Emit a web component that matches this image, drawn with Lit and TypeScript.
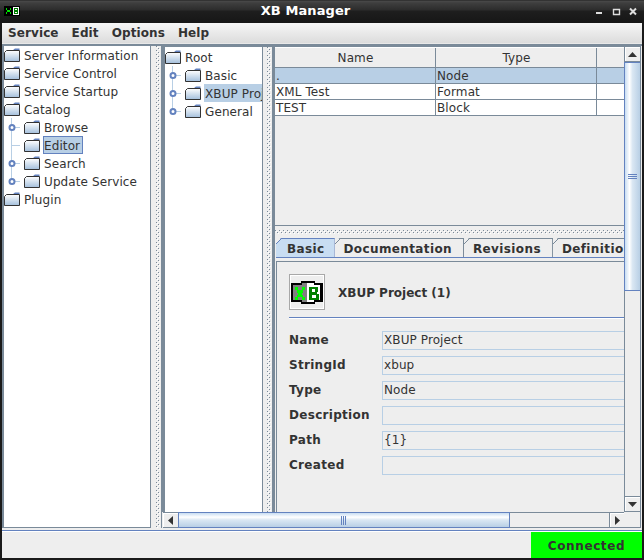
import { LitElement, html, css, svg } from 'lit';
import { customElement } from 'lit/decorators.js';

const folder = html`<svg class="folder" width="16" height="14" viewBox="0 0 16 14">
  <defs><linearGradient id="fg" x1="0" y1="0" x2="0" y2="1"><stop offset="0" stop-color="#fff"/><stop offset="1" stop-color="#a3bfdc"/></linearGradient></defs>
  <path d="M9.5 1.5 L11 0.5 H15.5 V2.5 H9.5Z" fill="#6382bf"/>
  <path d="M0.5 4.5 L2.5 2.5 H15.5 V13.5 H0.5Z" fill="url(#fg)" stroke="#333" stroke-width="1"/>
</svg>`;

// pixel logo: grey page with green X, white page with dark green B
const xbLogo = svg`<svg width="32" height="25" viewBox="0 0 32 25" shape-rendering="crispEdges">
  <path d="M0 3 H10 V1 H24 V3 H32 V22 H24 V24 H10 V22 H0Z" fill="#000"/>
  <path d="M2 5 H11 V3 H16 V22 H11 V20 H2Z" fill="#808080"/>
  <path d="M16 3 H23 V5 H29 V20 H23 V22 H16Z" fill="#fff"/>
  <path d="M4 7h3v3h-3z M11 7h3v3h-3z M6 10h6v3h-6z M7 13h4v2h-4z M6 15h6v2h-6z M4 17h3v3h-3z M11 17h3v3h-3z" fill="#00ff00"/>
  <path d="M18 7 H27 V12 H26 V14 H28 V20 H18Z M21 9 V12 H24 V9Z M21 15 V18 H25 V15Z" fill="#008000" fill-rule="evenodd"/>
</svg>`;

const titleIcon = svg`<svg class="appicon" width="16" height="10" viewBox="0 0 16 10" shape-rendering="crispEdges">
  <rect width="16" height="10" fill="#000"/>
  <rect x="9" y="1" width="6" height="8" fill="#fff"/>
  <path d="M2 2h1v2h-1z M6 2h1v2h-1z M3 4h3v2h-3z M2 6h1v2h-1z M6 6h1v2h-1z" fill="#00e000"/>
  <path d="M10 2h4v6h-4z M11 3v1h2v-1z M11 6v1h2v-1z" fill="#008000" fill-rule="evenodd"/>
</svg>`;

@customElement('tree-row')
class TreeRow extends LitElement {
  static properties = {
    label: { type: String },
    depth: { type: Number },
    knob: { type: Boolean },
    sel: { type: String },
    last: { type: Boolean },
  };
  label = '';
  depth = 0;
  knob = false;
  sel = '';
  last = false;

  static styles = css`
    :host { display: block; height: 18px; }
    .row { display: flex; align-items: center; height: 18px; white-space: nowrap; }
    .gut { flex: none; display: block; }
    .folder { flex: none; margin: 0 3px 0 0; }
    .text { box-sizing: border-box; height: 18px; line-height: 18px; padding-right: 2px; border: 1px solid transparent; letter-spacing: 0.1px; }
    .text.focus { background: #b8cfe5; border-color: #6382bf; }
    .text.fill { background: #b8cfe5; flex: 1; }
  `;

  render() {
    const gut = this.depth === 0 ? html`` : html`<svg class="gut" width="20" height="18" viewBox="0 0 20 18">
      <path d="M7.5 0 V${this.last ? 9 : 18}" stroke="#b8cfe5"/>
      <path d="M7.5 9.5 H16" stroke="#b8cfe5"/>
      ${this.knob ? svg`<circle cx="8" cy="9.5" r="2.5" fill="#fff" stroke="#6382bf" stroke-width="2"/>` : ''}
    </svg>`;
    const cls = this.sel === 'focus' ? 'text focus' : this.sel === 'fill' ? 'text fill' : 'text';
    return html`<div class="row">${gut}${folder}<span class=${cls}>${this.label}</span></div>`;
  }
}

@customElement('app-root')
export class AppRoot extends LitElement {
  static styles = css`
    :host {
      display: block;
      width: 644px;
      height: 560px;
      overflow: hidden;
      background: #1a1a1a;
      font-family: "DejaVu Sans", sans-serif;
      font-size: 12px;
      color: #333;
    }
    .window { display: flex; flex-direction: column; height: 560px; }

    /* title bar */
    .titlebar {
      height: 23px;
      flex: none;
      display: flex;
      align-items: center;
      position: relative;
      box-sizing: border-box;
      padding: 0 33px 3px 0;
      background: linear-gradient(#1c1c1c 0, #4a4a4a 1px, #3e3e3e 3px, #2c2c2c 10px, #1e1e1e 11px, #161616 100%);
      color: #fff;
      font-weight: bold;
      font-size: 13px;
      justify-content: center;
      letter-spacing: 0.1px;
    }
    .appicon { position: absolute; left: 4px; top: 6px; }
    .winbtns { position: absolute; right: 7px; top: 6px; }

    .body {
      flex: 1;
      min-height: 0;
      margin: 0 2px 2px;
      display: flex;
      flex-direction: column;
      background: #eee;
    }

    /* menu */
    .menubar {
      height: 20px;
      flex: none;
      display: flex;
      align-items: center;
      background: linear-gradient(#f6f6f6, #dcdcdc);
      font-weight: bold;
      letter-spacing: 0.1px;
      padding-left: 6px;
      gap: 13px;
      border-bottom: 1px solid #e8e8e8;
    }

    .main {
      flex: 1;
      min-height: 0;
      display: flex;
      background: #7a8a99;
      padding-top: 2px;
      margin-bottom: 2px;
    }
    .tree {
      background: #fff;
      overflow: hidden;
      box-sizing: border-box;
      flex: none;
    }
    .tree.left { width: 147px; margin-left: 2px; border-right: 1px solid #7a8a99; border-bottom: 1px solid #7a8a99; }
    .tree.inner { width: 98px; padding-top: 1px; border-right: 1px solid #7a8a99; }

    /* split pane dividers: two staggered columns of bump dots */
    .vdiv {
      flex: none;
      background-color: #eee;
      background-image:
        linear-gradient(#7a8a99 1px, transparent 1px),
        linear-gradient(#7a8a99 1px, transparent 1px),
        linear-gradient(#fff 1px, transparent 1px),
        linear-gradient(#fff 1px, transparent 1px);
      background-repeat: repeat-y;
      background-size: 1px 4px;
    }
    .vdiv.outer { width: 10px; background-position: 5px 0, 7px 2px, 6px 1px, 8px 3px; }
    .vdiv.inside { width: 9px; background-position: 4px 0, 6px 2px, 5px 1px, 7px 3px; }

    .scrollpane {
      flex: 1;
      min-width: 0;
      display: grid;
      grid-template-columns: 462px 17px;
      grid-template-rows: 466px 16px;
      background: #eee;
      margin-left: 1px;
    }
    .viewport { display: flex; min-width: 0; min-height: 0; overflow: hidden; background: #7a8a99; padding: 1px 0 0 3px; }

    .right { flex: 1; min-width: 0; display: flex; flex-direction: column; background: #eee; margin-left: 3px; }

    /* table */
    .tablepane { height: 179px; box-sizing: border-box; flex: none; background: #eee; border-bottom: 1px solid #7a8a99; }
    .tr { display: grid; grid-template-columns: 161px 161px 1fr; height: 16px; background: #fff; border-bottom: 1px solid #7a8a99; line-height: 16px; box-sizing: border-box; letter-spacing: 0.1px; }
    .tr > span { padding-left: 1px; border-right: 1px solid #7a8a99; overflow: hidden; }
    .tr > span:last-child { border-right: 0; }
    .tr.sel { background: #b8cfe5; }
    .tr.head { height: 21px; background: #eee; line-height: 21px; text-align: center; border-top: 1px solid #fff; }

    .hdiv {
      height: 10px;
      flex: none;
      background-color: #eee;
      background-image:
        linear-gradient(90deg, #7a8a99 1px, transparent 1px),
        linear-gradient(90deg, #7a8a99 1px, transparent 1px),
        linear-gradient(90deg, #fff 1px, transparent 1px),
        linear-gradient(90deg, #fff 1px, transparent 1px);
      background-repeat: repeat-x;
      background-size: 4px 1px;
      background-position: 0 4px, 2px 6px, 1px 5px, 3px 7px;
    }

    /* tabs */
    .tabs { flex: 1; min-height: 0; overflow: hidden; padding-left: 1px; }
    .tabstrip { display: flex; height: 22px; box-sizing: border-box; align-items: flex-end; border-bottom: 1px solid #6382bf; white-space: nowrap; }
    .tab {
      font-weight: bold;
      letter-spacing: 0.38px;
      height: 18px;
      line-height: 20px;
      padding: 0 11px 0 9px;
      border-top: 1px solid #7a8a99;
      border-right: 1px solid #7a8a99;
      box-sizing: content-box;
      flex: none;
      margin-top: auto;
      clip-path: polygon(5px 0, 100% 0, 100% 100%, 0 100%, 0 5px);
      background: linear-gradient(135deg, transparent 3px, #7a8a99 3px, #7a8a99 4px, #eee 4px);
    }
    .tab.on {
      padding: 0 9px 0 11px;
      background: linear-gradient(135deg, transparent 3px, #6382bf 3px, #6382bf 4px, #c8ddf2 4px);
      border-color: #6382bf;
    }
    .panel { border-left: 1px solid #7a8a99; border-top: 1px solid #7a8a99; margin-top: 3px; padding: 12px 0 0 12px; height: 300px; }
    .hdr { display: flex; align-items: center; gap: 13px; height: 36px; padding-bottom: 7px; border-bottom: 1px solid #6382bf; box-shadow: 0 1px 0 #fff; }
    .iconbox { width: 36px; height: 36px; flex: none; box-sizing: border-box; border: 1px solid #a8a8a8; background: #eee; display: flex; align-items: center; justify-content: center; box-shadow: inset 0 0 0 1px #fff; }
    .hdr b { font-weight: bold; margin-top: 2px; }
    .form { display: grid; grid-template-columns: 93px 1fr; grid-auto-rows: 25px; margin-top: 12px; }
    .form label { font-weight: bold; letter-spacing: 0.3px; line-height: 21px; }
    .field { height: 19px; margin-top: 1px; border: 1px solid #b8cfe5; border-right: 0; box-sizing: border-box; padding-left: 1px; line-height: 17px; background: #eee; letter-spacing: 0.1px; }

    /* scrollbars */
    .vbar { display: flex; flex-direction: column; background: #eee; border-left: 1px solid #7a8a99; border-right: 1px solid #7a8a99; }
    .arrow { flex: none; display: flex; align-items: center; justify-content: center; background: #eee; box-sizing: border-box; box-shadow: inset 1px 1px 0 #fff; }
    .vbar .arrow { height: 16px; border-bottom: 1px solid #7a8a99; border-top: 1px solid #7a8a99; }
    .vthumb { height: 229px; flex: none; margin: 0 0 0 -1px; background: linear-gradient(90deg, #c8ddf2, #fff 30%, #dae7f3 50%, #b8cfe5); border: 1px solid #6382bf; border-right: 0; box-sizing: border-box; display: flex; align-items: center; justify-content: center; }
    .vtrack { flex: 1; }
    .hbar { display: flex; background: #eee; border-top: 1px solid #7a8a99; border-bottom: 1px solid #7a8a99; margin-left: 1px; box-sizing: border-box; }
    .hbar .arrow { width: 15px; }
    .hbar .arrow.end { border-left: 1px solid #7a8a99; }
    .hthumb { width: 332px; flex: none; margin: -1px 0; background: linear-gradient(#c8ddf2, #fff 30%, #dae7f3 50%, #b8cfe5); border: 1px solid #6382bf; box-sizing: border-box; display: flex; align-items: center; justify-content: center; }
    .htrack { flex: 1; }
    .corner { background: #eee; border-right: 1px solid #7a8a99; border-bottom: 1px solid #7a8a99; }

    /* status */
    .statusbar { height: 28px; box-sizing: border-box; flex: none; display: flex; justify-content: flex-end; background: #eee; border-top: 1px solid #6382bf; box-shadow: inset 0 1px 0 #fff; }
    .connected { width: 111px; background: #00ff00; display: flex; align-items: center; justify-content: center; font-weight: bold; letter-spacing: 0.6px; margin-top: 1px; padding-top: 2px; box-sizing: border-box; }
  `;

  render() {
    return html`<div class="window">
      <div class="titlebar">
        ${titleIcon}
        XB Manager
        <svg class="winbtns" width="42" height="10" viewBox="0 0 42 10">
          <path d="M1 6 H7 V8 H1Z" fill="#ddd"/>
          <path d="M18.5 3.5 H24.5 V8.5 H18.5Z" fill="none" stroke="#ddd" stroke-width="1.4"/>
          <path d="M35 2.5 L41 8.5 M41 2.5 L35 8.5" stroke="#ddd" stroke-width="2"/>
        </svg>
      </div>
      <div class="body">
        <div class="menubar"><span>Service</span><span>Edit</span><span>Options</span><span>Help</span></div>
        <div class="main">
          <div class="tree left">
            <tree-row label="Server Information"></tree-row>
            <tree-row label="Service Control"></tree-row>
            <tree-row label="Service Startup"></tree-row>
            <tree-row label="Catalog"></tree-row>
            <tree-row depth="1" knob label="Browse"></tree-row>
            <tree-row depth="1" label="Editor" sel="focus"></tree-row>
            <tree-row depth="1" knob label="Search"></tree-row>
            <tree-row depth="1" knob last label="Update Service"></tree-row>
            <tree-row label="Plugin"></tree-row>
          </div>
          <div class="vdiv outer"></div>
          <div class="scrollpane">
            <div class="viewport">
              <div class="tree inner">
                <tree-row label="Root"></tree-row>
                <tree-row depth="1" knob label="Basic"></tree-row>
                <tree-row depth="1" knob label="XBUP Project" sel="fill"></tree-row>
                <tree-row depth="1" knob last label="General"></tree-row>
              </div>
              <div class="vdiv inside"></div>
              <div class="right">
                <div class="tablepane">
                  <div class="tr head"><span>Name</span><span>Type</span><span></span></div>
                  <div class="tr sel"><span>.</span><span>Node</span><span></span></div>
                  <div class="tr"><span>XML Test</span><span>Format</span><span></span></div>
                  <div class="tr"><span>TEST</span><span>Block</span><span></span></div>
                </div>
                <div class="hdiv"></div>
                <div class="tabs">
                  <div class="tabstrip">
                    <span class="tab on">Basic</span><span class="tab">Documentation</span><span class="tab">Revisions</span><span class="tab">Definition</span>
                  </div>
                  <div class="panel">
                    <div class="hdr"><span class="iconbox">${xbLogo}</span><b>XBUP Project (1)</b></div>
                    <div class="form">
                      <label>Name</label><div class="field">XBUP Project</div>
                      <label>StringId</label><div class="field">xbup</div>
                      <label>Type</label><div class="field">Node</div>
                      <label>Description</label><div class="field"></div>
                      <label>Path</label><div class="field">{1}</div>
                      <label>Created</label><div class="field"></div>
                    </div>
                  </div>
                </div>
              </div>
            </div>
            <div class="vbar">
              <span class="arrow"><svg width="9" height="5"><path d="M4.5 0 L9 5 H0Z" fill="#333"/></svg></span>
              <div class="vthumb"><svg width="9" height="6"><path d="M0 .5H9M0 2.5H9M0 4.5H9" stroke="#6382bf"/></svg></div>
              <div class="vtrack"></div>
              <span class="arrow"><svg width="9" height="5"><path d="M0 0 H9 L4.5 5Z" fill="#333"/></svg></span>
            </div>
            <div class="hbar">
              <span class="arrow"><svg width="5" height="9"><path d="M5 0 V9 L0 4.5Z" fill="#333"/></svg></span>
              <div class="hthumb"><svg width="6" height="9"><path d="M.5 0V9M2.5 0V9M4.5 0V9" stroke="#6382bf"/></svg></div>
              <div class="htrack"></div>
              <span class="arrow end"><svg width="5" height="9"><path d="M0 0 L5 4.5 L0 9Z" fill="#333"/></svg></span>
            </div>
            <div class="corner"></div>
          </div>
        </div>
        <div class="statusbar"><span class="connected">Connected</span></div>
      </div>
    </div>`;
  }
}
